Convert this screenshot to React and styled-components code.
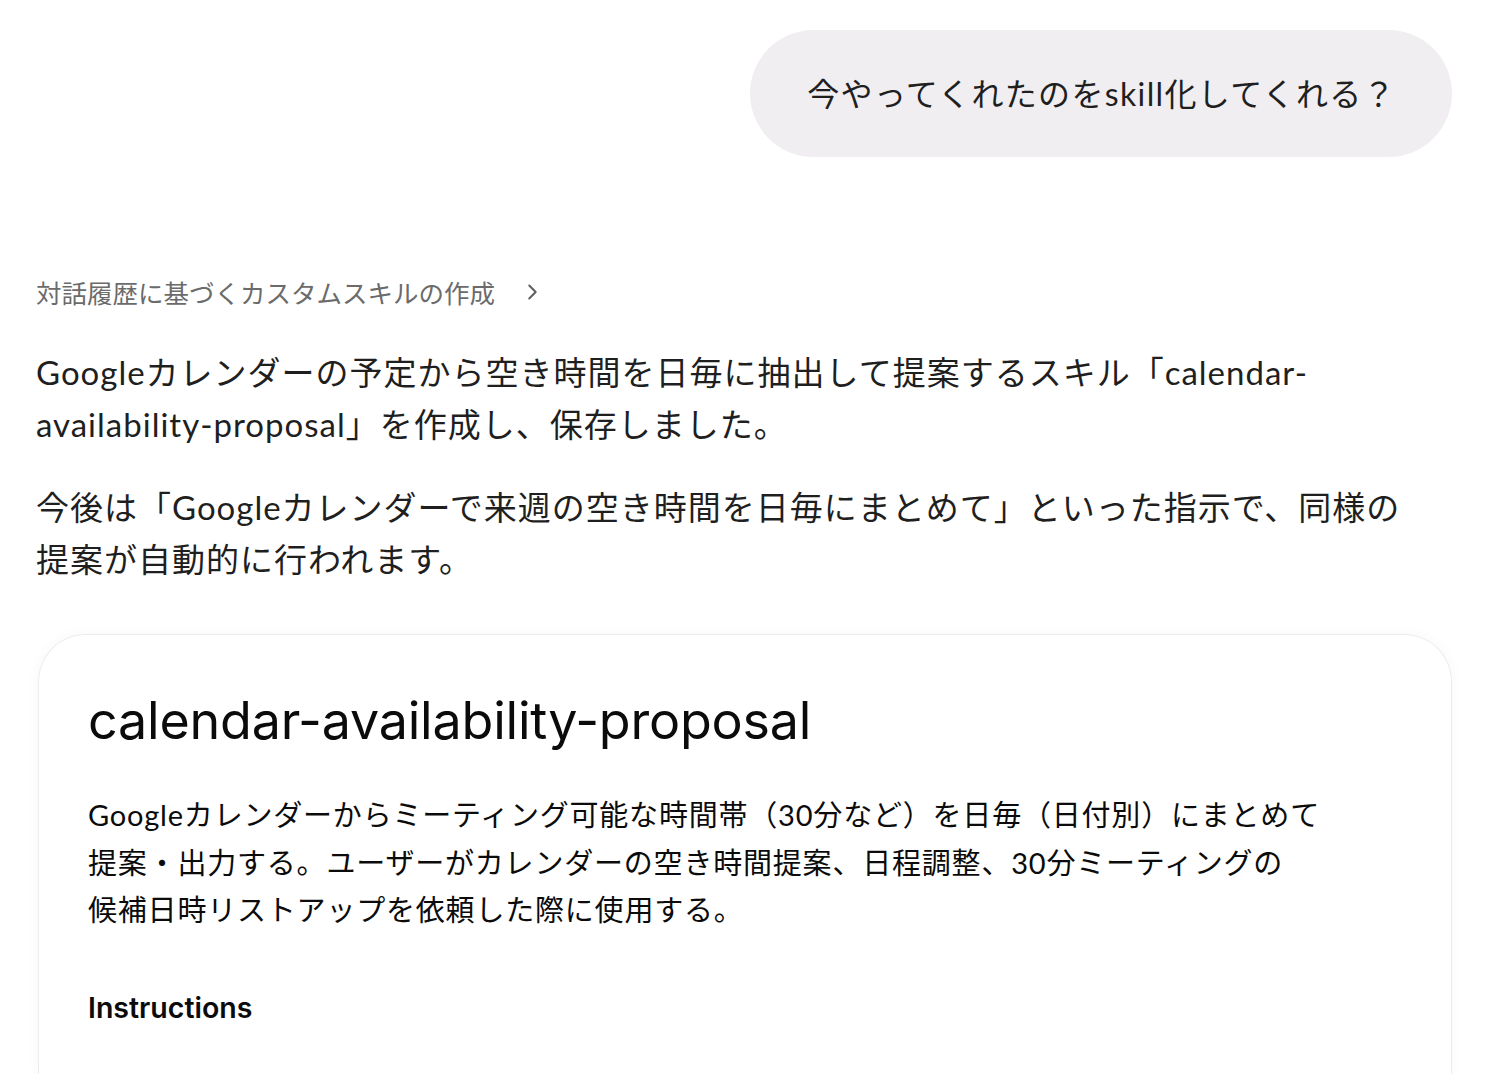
import React from "react"
import styled, { createGlobalStyle } from "styled-components"

const GlobalStyle = createGlobalStyle`
  html, body {
    margin: 0;
    padding: 0;
    background: #ffffff;
  }
  body {
    font-family: "Lato", "Noto Sans CJK JP", sans-serif;
    color: #1f1f1f;
    text-spacing-trim: space-all;
  }
`

const Page = styled.div`
  display: flex;
  flex-direction: column;
  padding: 30px 46px 0 36px;
  height: 1074px;
  box-sizing: border-box;
  overflow: hidden;
`

const UserRow = styled.div`
  display: flex;
  justify-content: flex-end;
`

const Bubble = styled.div`
  background: #f0eef0;
  border-radius: 64px;
  height: 127px;
  padding: 0 56px 4px 57px;
  box-sizing: border-box;
  display: flex;
  align-items: center;
  font-size: 32px;
  letter-spacing: 1.35px;
  color: #1f1f1f;
`

const ThoughtToggle = styled.div`
  display: flex;
  align-items: center;
  gap: 26px;
  margin-top: 116px;
  font-family: "Noto Sans CJK JP", sans-serif;
  font-size: 25.5px;
  color: #6b6b6b;
`

const Chevron = () => (
  <svg width="22" height="22" viewBox="0 0 24 24" fill="none" stroke="#5f5f5f" strokeWidth="2.2" strokeLinecap="round" strokeLinejoin="round">
    <path d="M9 5l7 7-7 7" />
  </svg>
)

const Para = styled.p`
  margin: ${p => p.$top || 0}px 0 0;
  padding-right: 36px;
  font-size: 33px;
  letter-spacing: 1px;
  line-height: 52px;
  color: #1f1f1f;
`

const Card = styled.div`
  margin: 49px 0 0 2px;
  border: 1.5px solid #ececec;
  border-bottom: none;
  border-radius: 48px 48px 0 0;
  box-shadow: 0 0 14px rgba(0, 0, 0, 0.035);
  padding: 54px 49px 0;
  flex: 1;
  color: #0b0b0b;
`

const CardTitle = styled.h1`
  margin: 0;
  font-family: "Inter", "Noto Sans CJK JP", sans-serif;
  font-size: 52px;
  font-weight: 400;
  line-height: 64px;
  letter-spacing: -0.2px;
`

const CardText = styled.p`
  margin: 38px 0 0;
  font-size: 29px;
  letter-spacing: 0.8px;
  line-height: 47.5px;
`

const SectionHead = styled.h2`
  margin: 54px 0 0;
  font-family: "Inter", "Noto Sans CJK JP", sans-serif;
  font-size: 28.5px;
  font-weight: 600;
  line-height: 40px;
`

export default function App() {
  return (
    <>
      <GlobalStyle />
      <Page>
        <UserRow>
          <Bubble>今やってくれたのをskill化してくれる？</Bubble>
        </UserRow>
        <ThoughtToggle>
          <span>対話履歴に基づくカスタムスキルの作成</span>
          <Chevron />
        </ThoughtToggle>
        <Para $top={36}>
          Googleカレンダーの予定から空き時間を日毎に抽出して提案するスキル「calendar-availability-proposal」を作成し、保存しました。
        </Para>
        <Para $top={31}>
          今後は「Googleカレンダーで来週の空き時間を日毎にまとめて」といった指示で、同様の提案が自動的に行われます。
        </Para>
        <Card>
          <CardTitle>calendar-availability-proposal</CardTitle>
          <CardText>
            Googleカレンダーからミーティング可能な時間帯（30分など）を日毎（日付別）にまとめて<br />
            提案・出力する。ユーザーがカレンダーの空き時間提案、日程調整、30分ミーティングの<br />
            候補日時リストアップを依頼した際に使用する。
          </CardText>
          <SectionHead>Instructions</SectionHead>
        </Card>
      </Page>
    </>
  )
}
